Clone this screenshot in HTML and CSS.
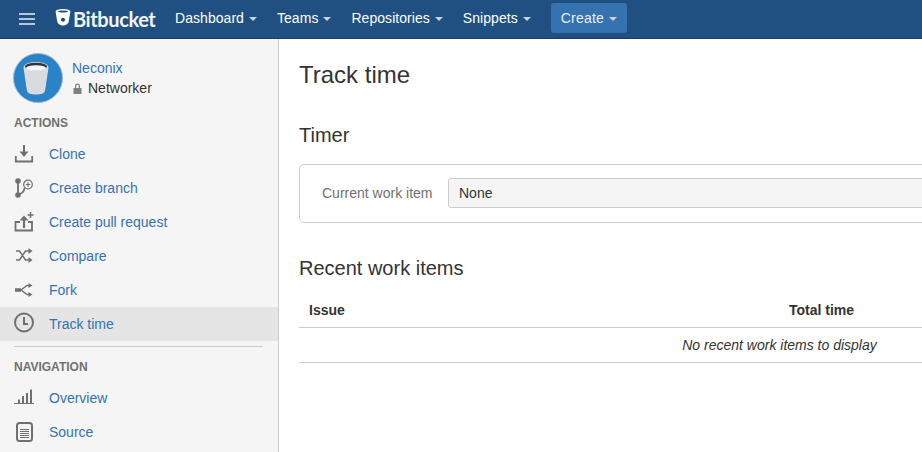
FILE: index.html
```html
<!DOCTYPE html>
<html lang="en">
<head>
<meta charset="utf-8">
<title>Track time</title>
<link rel="stylesheet" href="styles.css">
</head>
<body>
<header class="topbar">
  <svg class="burger" width="16" height="12" viewBox="0 0 16 12"><path d="M0 1h16M0 6h16M0 11h16" stroke="#e8eef5" stroke-width="1.7"/></svg>
  <a class="logo">
    <svg class="logo-mark" width="16" height="17" viewBox="0 0 16 18"><path fill="#fff" fill-rule="evenodd" d="M8 0C3.800 0 .2 1 .2 2.600c0 .6 1.300 8.400 1.900 11.200C2.400 15.600 5.200 17.500 8 17.500s5.600-1.900 5.900-3.700c.6-2.800 1.900-10.600 1.900-11.200C15.800 1 12.200 0 8 0zM8 1.600c2.900 0 5.200.4 5.200 1S10.900 3.600 8 3.600 2.800 3.200 2.800 2.600 5.100 1.600 8 1.600zM8 13.600a2.200 2.200 0 1 1 0-4.400 2.200 2.200 0 0 1 0 4.400z"/></svg>
    <span class="logo-text">Bitbucket</span>
  </a>
  <nav class="nav">
    <a class="nav-item">Dashboard<i class="caret"></i></a>
    <a class="nav-item">Teams<i class="caret"></i></a>
    <a class="nav-item">Repositories<i class="caret"></i></a>
    <a class="nav-item">Snippets<i class="caret"></i></a>
    <a class="create">Create<i class="caret"></i></a>
  </nav>
</header>
<div class="layout">
  <aside class="sidebar">
    <div class="profile">
      <svg class="avatar" width="50" height="50" viewBox="0 0 50 50">
        <circle cx="25" cy="25" r="24.500" fill="#2a82c9" stroke="#9fb7c9"/>
        <path d="M10.500 15c0-4 5.500-6 12.500-6s12.500 2 12.500 6L32 38c-.5 2.500-4.500 3.500-9 3.500S14.500 40.500 14 38z" fill="#d9dcde"/>
        <ellipse cx="23" cy="13.500" rx="11" ry="3.800" fill="#333"/>
        <ellipse cx="23" cy="15" rx="10" ry="2.800" fill="#f6f6f6"/>
      </svg>
      <div class="profile-text">
        <a class="link">Neconix</a>
        <div class="repo">
          <svg width="10" height="11" viewBox="0 0 10 11"><path fill="#808080" d="M1.500 5h8v6h-8zM3 5V3a2.500 2.500 0 0 1 5 0v2H6.800V3a1.300 1.300 0 0 0-2.600 0v2z"/></svg>
          <span>Networker</span>
        </div>
      </div>
    </div>
    <h3 class="section">ACTIONS</h3>
    <ul class="menu">
      <li class="item"><span class="ico"><svg width="20" height="20" viewBox="0 0 20 20" fill="none" stroke="#707070"><path stroke-width="2" d="M10 1v8"/><path fill="#707070" stroke="none" d="M5.500 7.500h9L10 13z"/><path stroke-width="1.800" d="M1.800 12v5.500h16.400V12"/></svg></span><a class="link">Clone</a></li>
      <li class="item"><span class="ico"><svg width="20" height="20" viewBox="0 0 20 20" fill="none" stroke="#707070"><circle cx="4" cy="3" r="2.800" fill="#707070" stroke="none"/><circle cx="4" cy="17" r="2.800" fill="#707070" stroke="none"/><path stroke-width="1.800" d="M4 3v14M4 16c4 0 6-2 6.500-6"/><circle cx="14" cy="6.500" r="4.300" stroke-width="1.200"/><path stroke-width="1.200" d="M11.800 6.500h4.400M14 4.300v4.400"/></svg></span><a class="link">Create branch</a></li>
      <li class="item"><span class="ico"><svg width="20" height="20" viewBox="0 0 20 20" fill="none" stroke="#707070"><path stroke-width="1.800" d="M6 10H1.500v8.500h16.500V10H14"/><path stroke-width="2.200" d="M10 16V6"/><path fill="#707070" stroke="none" d="M5.500 8.500 10 3.500 14.500 8.500z"/><path stroke-width="1.500" d="M16.500 0v6M13.500 3h6"/></svg></span><a class="link">Create pull request</a></li>
      <li class="item"><span class="ico"><svg width="20" height="20" viewBox="0 0 20 20" fill="none" stroke="#707070" stroke-width="1.500"><path d="M2 5h3.500l6 9H15M2 14h3.500l6-9H15"/><path fill="#707070" stroke="none" d="M14.500 2l4 3-4 3zM14.500 11l4 3-4 3z"/></svg></span><a class="link">Compare</a></li>
      <li class="item"><span class="ico"><svg width="20" height="20" viewBox="0 0 20 20" fill="none" stroke="#707070" stroke-width="1.500"><path stroke-width="3.500" d="M1 10h6"/><path d="M7 10l6-4.500h2M7 10l6 4.500h2"/><path fill="#707070" stroke="none" d="M14.500 3l4 2.500-4 2.500zM14.500 12l4 2.500-4 2.500z"/></svg></span><a class="link">Fork</a></li>
      <li class="item active"><span class="ico"><svg width="20" height="20" viewBox="0 0 20 20" fill="none" stroke="#707070" stroke-width="2"><circle cx="10" cy="8.500" r="9"/><path d="M10 3v7h4"/></svg></span><a class="link">Track time</a></li>
    </ul>
    <hr class="rule">
    <h3 class="section nav-section">NAVIGATION</h3>
    <ul class="menu">
      <li class="item"><span class="ico"><svg width="20" height="20" viewBox="0 0 20 20" fill="#707070"><path d="M0 15h20v1H0zM4 11.500h2v4H4zM8 8h2v7.500H8zM12 5h2v10.500h-2zM16 1.500h2v14h-2z"/></svg></span><a class="link">Overview</a></li>
      <li class="item"><span class="ico"><svg width="20" height="20" viewBox="0 0 20 20" fill="none" stroke="#707070"><rect x="3" y="1" width="15" height="18" rx="2.500" stroke-width="2"/><path d="M6 7.500h9M6 9.500h9M6 11.500h9M6 13.500h9M6 15.500h9" stroke-width="1"/></svg></span><a class="link">Source</a></li>
    </ul>
  </aside>
  <main class="content">
    <h1 class="title">Track time</h1>
    <h2 class="subtitle timer">Timer</h2>
    <form class="panel">
      <label class="field-label">Current work item</label>
      <div class="select">None</div>
    </form>
    <h2 class="subtitle recent">Recent work items</h2>
    <table class="table">
      <thead><tr><th class="col-issue">Issue</th><th class="col-total">Total time</th></tr></thead>
      <tbody><tr><td colspan="2" class="empty">No recent work items to display</td></tr></tbody>
    </table>
  </main>
</div>
</body>
</html>
```
FILE: styles.css
```css
* { box-sizing: border-box; }
html, body { margin: 0; height: 100%; overflow: hidden; }
body { font-family: "Liberation Sans", Arial, sans-serif; font-size: 14px; line-height: 20px; color: #333; background: #fff; width: 922px; height: 452px; }
.topbar { height: 39px; background: #205081; border-bottom: 1px solid #1b3a5c; display: flex; align-items: center; padding-left: 19px; color: #fff; }
.burger { flex: none; }
.logo { display: flex; align-items: center; margin-left: 20px; gap: 2px; }
.logo-mark { margin-top: -3px; }
.logo-text { font-family: "Lato", sans-serif; font-weight: 700; font-size: 20px; letter-spacing: -.4px; color: #f2f5f8; width: 83px; }
.nav { display: flex; align-items: center; margin-left: 19px; }
.nav-item { color: #fff; margin-right: 20px; white-space: nowrap; letter-spacing: .05px; position: relative; top: -1px; }
.caret { display: inline-block; width: 0; height: 0; margin-left: 5px; vertical-align: middle; border: 4px solid transparent; border-top-color: #c7d3e0; border-bottom: 0; }
.create { background: #3572b0; color: #e9f0f7; border-radius: 3px; height: 30px; padding: 5px 10px; letter-spacing: .2px; white-space: nowrap; position: relative; top: -1px; }
.layout { display: flex; height: 413px; }
.sidebar { width: 279px; flex: none; background: #f5f5f5; border-right: 1px solid #ccc; padding-top: 14px; overflow: hidden; }
.profile { display: flex; padding-left: 13px; height: 50px; }
.avatar { flex: none; }
.profile-text { margin-left: 9px; padding-top: 5px; }
.link { color: #3572b0; display: block; }
.repo { display: flex; align-items: center; gap: 6px; color: #333; }
.section { margin: 10px 0 0 14px; font-size: 12px; line-height: 20px; font-weight: 700; color: #707070; }
.menu { list-style: none; margin: 4px 0 0; padding: 0; }
.item { height: 34px; display: flex; align-items: center; padding-left: 14px; }
.item .link { margin-left: 15px; }
.ico { width: 20px; height: 20px; display: block; }
.ico svg { display: block; overflow: visible; }
.active { background: #e5e5e5; }
.rule { margin: 5px 15px 0 14px; border: 0; border-top: 1px solid #ccc; height: 0; }
.nav-section { margin-top: 10px; }
.content { flex: none; width: 961px; padding: 0 0 0 20px; margin-right: -320px; }
.title { margin: 20px 0 0; font-size: 24px; line-height: 32px; font-weight: 400; color: #333; }
.subtitle { margin: 0; font-size: 20px; line-height: 28px; font-weight: 400; color: #333; }
.timer { margin-top: 30px; }
.panel { margin-top: 15px; height: 59px; border: 1px solid #ccc; border-radius: 5px; display: flex; align-items: center; padding: 0 0 2px 22px; }
.field-label { color: #707070; width: 111px; white-space: nowrap; }
.select { margin-left: 15px; flex: 1; height: 30px; background: #f5f5f5; border: 1px solid #ccc; border-radius: 3px; padding: 4px 10px; margin-right: 20px; color: #333; }
.recent { margin-top: 31px; }
.table { margin-top: 11px; width: 961px; border-collapse: collapse; table-layout: fixed; }
.table th { text-align: left; padding: 7px 10px; height: 34px; font-weight: 700; border-bottom: 1px solid #ccc; color: #333; }
.col-issue { width: 480px; }
.table td { padding: 7px 10px; height: 35px; border-bottom: 1px solid #ccc; }
.empty { text-align: center; font-style: italic; }
```
